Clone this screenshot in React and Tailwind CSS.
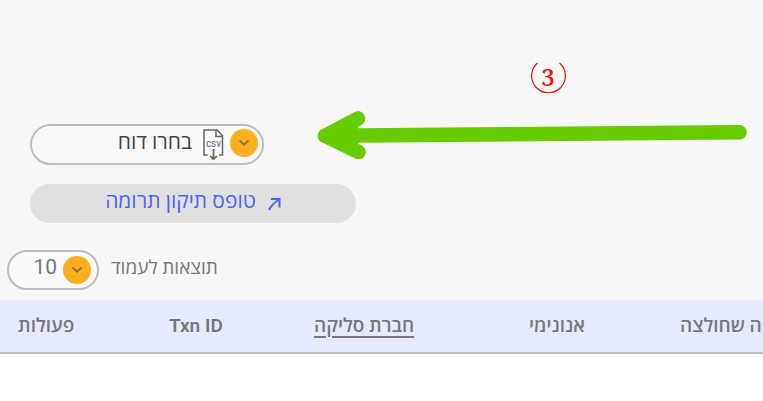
const FONT = 'font-[Roboto,"Open_Sans","Noto_Sans",sans-serif]';

const PAGE_SIZES = [10, 25, 50, 100];

const COLUMNS = [
  { label: 'ה שחולצה', className: '' },
  { label: 'אנונימי', className: 'w-[151px]' },
  { label: 'חברת סליקה', className: 'w-[215px]', sorted: true },
  { label: 'Txn ID', className: 'w-[145px]' },
  { label: 'פעולות', className: 'w-[151px]' },
];

function ChevronDot() {
  return (
    <span className="flex size-7 items-center justify-center rounded-full bg-[#ffae1f]">
      <svg width="12" height="8" viewBox="0 0 12 8" fill="none" stroke="#8a733f" strokeWidth="1.800">
        <path d="M1.500 1.500 6 5.700l4.500-4.200" />
      </svg>
    </span>
  );
}

function CsvIcon() {
  return (
    <svg className="mt-1" width="21" height="32" viewBox="0 0 21 32" fill="none" stroke="#666" strokeWidth="1.500">
      <path d="M4.500 26H1V1h13l5.500 5.500V26H16" />
      <path d="M13 1v6.500h6.500" />
      <path d="M10.500 20v10M7.200 26.800l3.300 3.500 3.300-3.500" strokeWidth="1.800" />
      <text x="10.500" y="18" textAnchor="middle" fontSize="10" fill="#5d6780" stroke="none" fontFamily="Roboto, sans-serif">
        csv
      </text>
    </svg>
  );
}

function ReportSelect() {
  return (
    <div className="relative w-[234px]">
      <select
        aria-label="בחרו דוח"
        dir="rtl"
        className="h-[41px] w-full appearance-none rounded-full border-2 border-[#bdbdbd] bg-[#f9f9f9] pr-[70px] pb-1 text-[21px] text-[#444]"
      >
        <option>בחרו דוח</option>
      </select>
      <span className="pointer-events-none absolute inset-y-0 right-1.5 flex items-center gap-1.5 pb-1">
        <CsvIcon />
        <ChevronDot />
      </span>
    </div>
  );
}

function PageSize() {
  return (
    <div className="flex items-center gap-3 pl-[7px]">
      <div className="relative w-[92px]">
        <select
          id="page-size"
          dir="rtl"
          className="h-10 w-full appearance-none rounded-full border-2 border-[#bdbdbd] bg-[#f9f9f9] pr-10 pb-1 text-[21px] text-[#777]"
        >
          {PAGE_SIZES.map(n => (
            <option key={n}>{n}</option>
          ))}
        </select>
        <span className="pointer-events-none absolute inset-y-0 right-2 flex items-center">
          <ChevronDot />
        </span>
      </div>
      <label htmlFor="page-size" className="pb-1 text-[19px] text-[#777]">תוצאות לעמוד</label>
    </div>
  );
}

function StepMarker() {
  return (
    <div className="pointer-events-none absolute top-[60px] right-4 flex w-[430px] flex-col items-center">
      <div className="ml-8 grid h-[33px] w-[35px] place-items-center">
        <svg className="col-start-1 row-start-1" width="35" height="33" viewBox="0 0 35 33" fill="none" stroke="#ff0000" strokeWidth="1.200">
          <path d="M6.500 3A16.900 16.900 0 1 0 28.500 3" />
        </svg>
        <span className="col-start-1 row-start-1 font-['Noto_Serif','DejaVu_Serif',serif] text-2xl leading-7 font-medium text-[#ff0000]">
          3
        </span>
      </div>
      <svg className="mt-[18px]" width="430" height="48" viewBox="0 0 430 48" fill="none" stroke="#66cc00" strokeWidth="14.500" strokeLinecap="round" strokeLinejoin="round">
        <path d="M422.500 21.300 8 24.800" />
        <path d="M41 7.500 8 24.800 41.500 41" fill="#66cc00" />
      </svg>
    </div>
  );
}

export default function App() {
  return (
    <div className={`min-h-screen bg-white ${FONT}`}>
      <div className="relative flex flex-col bg-[#f7f7f7] pt-[124px] pb-[10px]">
        <div className="flex flex-col items-start gap-[19px] pl-[30px]">
          <ReportSelect />
          <a
            href="#correction"
            dir="rtl"
            className="flex h-[39px] w-[326px] items-center justify-center gap-3 rounded-full bg-[#e0e0e0] pb-1 text-[21px] text-[#4f62f5]"
          >
            <svg className="mt-1" width="13" height="14" viewBox="0 0 13 14" fill="none" stroke="currentColor" strokeWidth="2">
              <path d="M1 13Q4 7 11 2.500M3 2h8.500v8.500" />
            </svg>
            טופס תיקון תרומה
          </a>
        </div>
        <div className="mt-[27px]">
          <PageSize />
        </div>
        <StepMarker />
      </div>
      <table dir="rtl" className="w-full table-fixed border-collapse">
        <thead>
          <tr className="h-[53px] border-b-2 border-[#bdbdbd] bg-[#e6eaff]">
            {COLUMNS.map(col => (
              <th key={col.label} scope="col" className={`pl-[18px] text-left text-[19px] font-semibold whitespace-nowrap text-[#777] ${col.className}`}>
                {col.sorted ? <span className="underline decoration-2 underline-offset-4">{col.label}</span> : col.label}
              </th>
            ))}
          </tr>
        </thead>
      </table>
    </div>
  );
}
